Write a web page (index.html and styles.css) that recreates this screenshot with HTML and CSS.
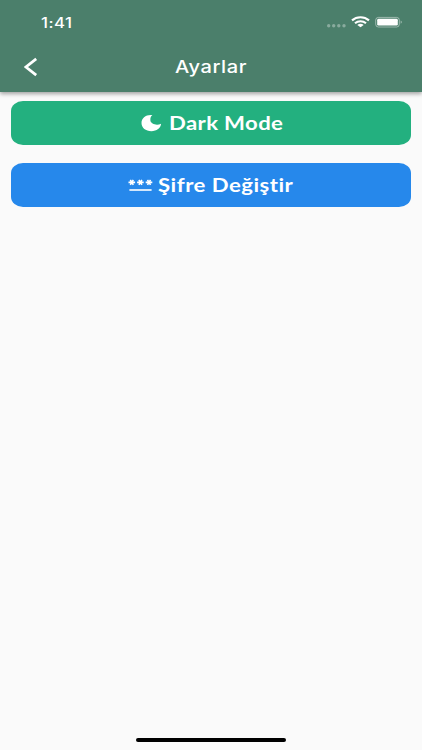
FILE: index.html
```
<!DOCTYPE html>
<html lang="tr">
<head>
    <meta charset="UTF-8">
    <meta name="viewport" content="width=device-width, initial-scale=1.0">
    <title>Ayarlar</title>
    <link rel="stylesheet" href="styles.css">
</head>
<body>
    <div class="screen">
        <header class="header">
            <!-- Durum çubuğu -->
            <div class="status-bar">
                <span class="time">1:41</span>
                <svg class="status-icons" width="78" height="16" viewBox="0 0 78 16">
                    <g fill="#fff" fill-opacity="0.35">
                        <circle cx="2.7" cy="11.7" r="1.7"/>
                        <circle cx="7.7" cy="11.7" r="1.7"/>
                        <circle cx="12.8" cy="11.7" r="1.7"/>
                        <circle cx="18" cy="11.7" r="1.7"/>
                    </g>
                    <g fill="none" stroke="#fff" stroke-width="2.1">
                        <path d="M26 6.4C30.8 2.1 38.2 2.1 43 6.4"/>
                        <path d="M29 9.3C32.1 6.5 36.9 6.5 40 9.3"/>
                    </g>
                    <path fill="#fff" d="M31.3 11C33.3 9.4 35.7 9.4 37.7 11L34.5 13.3z"/>
                    <rect x="49.7" y="3.4" width="23.6" height="9.6" rx="2.7" fill="none" stroke="#fff" stroke-opacity="0.45"/>
                    <rect x="51.2" y="4.8" width="20.6" height="6.8" rx="1.4" fill="#fff"/>
                    <path fill="#fff" fill-opacity="0.5" d="M74.7 6.6q2.2 1.6 0 3.2z"/>
                </svg>
            </div>
            <!-- Başlık -->
            <div class="nav-bar">
                <svg class="back" width="14" height="20" viewBox="0 0 14 20">
                    <path d="M12.2 1.9L2 10L12.2 18.1" fill="none" stroke="#fff" stroke-width="2.7"/>
                </svg>
                <h1 class="title">Ayarlar</h1>
            </div>
        </header>

        <main class="content">
            <button class="btn btn-green">
                <svg class="icon-moon" width="21" height="18" viewBox="0 0 21 18">
                    <path fill="#fff" d="M11.4 1.1C5.2.3.5 4 .5 9c0 4.8 4.2 8.2 9.9 8.2 5.2 0 9.4-3.3 9.7-7.4-4.5 2-10.2.3-10.7-3.2C9.2 4.1 9.8 2.2 11.4 1.1z"/>
                </svg>
                <span class="label label-dark">Dark Mode</span>
            </button>
            <button class="btn btn-blue">
                <svg class="icon-password" width="25" height="14" viewBox="0 0 25 14">
                    <g fill="none" stroke="#fff" stroke-width="1.6">
                        <path d="M2.3 1.9l3 5M5.3 1.9l-3 5M.5 4.4h6.6"/>
                        <path d="M10.9 1.9l3 5M13.9 1.9l-3 5M9.1 4.4h6.6"/>
                        <path d="M19.5 1.9l3 5M22.5 1.9l-3 5M17.7 4.4h6.6"/>
                        <path d="M1.4 12h22.2"/>
                    </g>
                </svg>
                <span class="label label-password">Şifre Değiştir</span>
            </button>
        </main>

        <div class="home-indicator"></div>
    </div>
</body>
</html>
```
FILE: styles.css
```
body {
    margin: 0;
    background-color: #fafafa;
    font-family: Inter, "Noto Sans", sans-serif;
    color: white;
}
.screen {
    display: flex;
    flex-direction: column;
    height: 750px;
    overflow: hidden;
}
.header {
    height: 92px;
    background-color: #4b7f6b;
    box-shadow: 0 2px 4px rgba(0,0,0,0.35);
}
.status-bar {
    display: flex;
    justify-content: space-between;
    align-items: center;
    height: 44px;
    padding: 0 18px 0 41px;
}
.time {
    font-size: 14px;
    font-weight: 500;
    letter-spacing: 0.4px;
    transform: scaleX(1.2);
    transform-origin: left;
}
.status-icons {
    margin-top: -1px;
}
.nav-bar {
    display: grid;
    grid-template-columns: 60px 1fr 60px;
    align-items: center;
    height: 46px;
}
.back {
    margin-left: 24px;
}
.title {
    margin: 0;
    text-align: center;
    font-size: 17px;
    font-weight: 500;
    letter-spacing: 0.5px;
    transform: scaleX(1.18);
}
.content {
    display: flex;
    flex: 1;
    flex-direction: column;
    gap: 18px;
    padding: 9px 11px 0;
}
.btn {
    display: flex;
    align-items: center;
    height: 44px;
    padding: 0;
    border: none;
    border-radius: 12px / 10px;
    color: white;
    font-family: Lato, "Noto Sans", sans-serif;
    font-size: 18px;
    font-weight: bold;
    cursor: pointer;
}
.btn-green {
    background-color: #23b07f;
}
.btn-blue {
    background-color: #2688eb;
}
.icon-moon {
    margin-left: 130px;
}
.icon-password {
    margin-left: 117px;
}
.label {
    white-space: nowrap;
    letter-spacing: 0.3px;
    font-variant-ligatures: none;
    transform: scaleX(1.23);
    transform-origin: left;
}
.label-dark {
    margin-left: 7px;
}
.label-password {
    margin-left: 5px;
    letter-spacing: 0.4px;
}
.home-indicator {
    align-self: center;
    width: 150px;
    height: 4px;
    margin-bottom: 8px;
    border-radius: 2px;
    background-color: black;
}
```
